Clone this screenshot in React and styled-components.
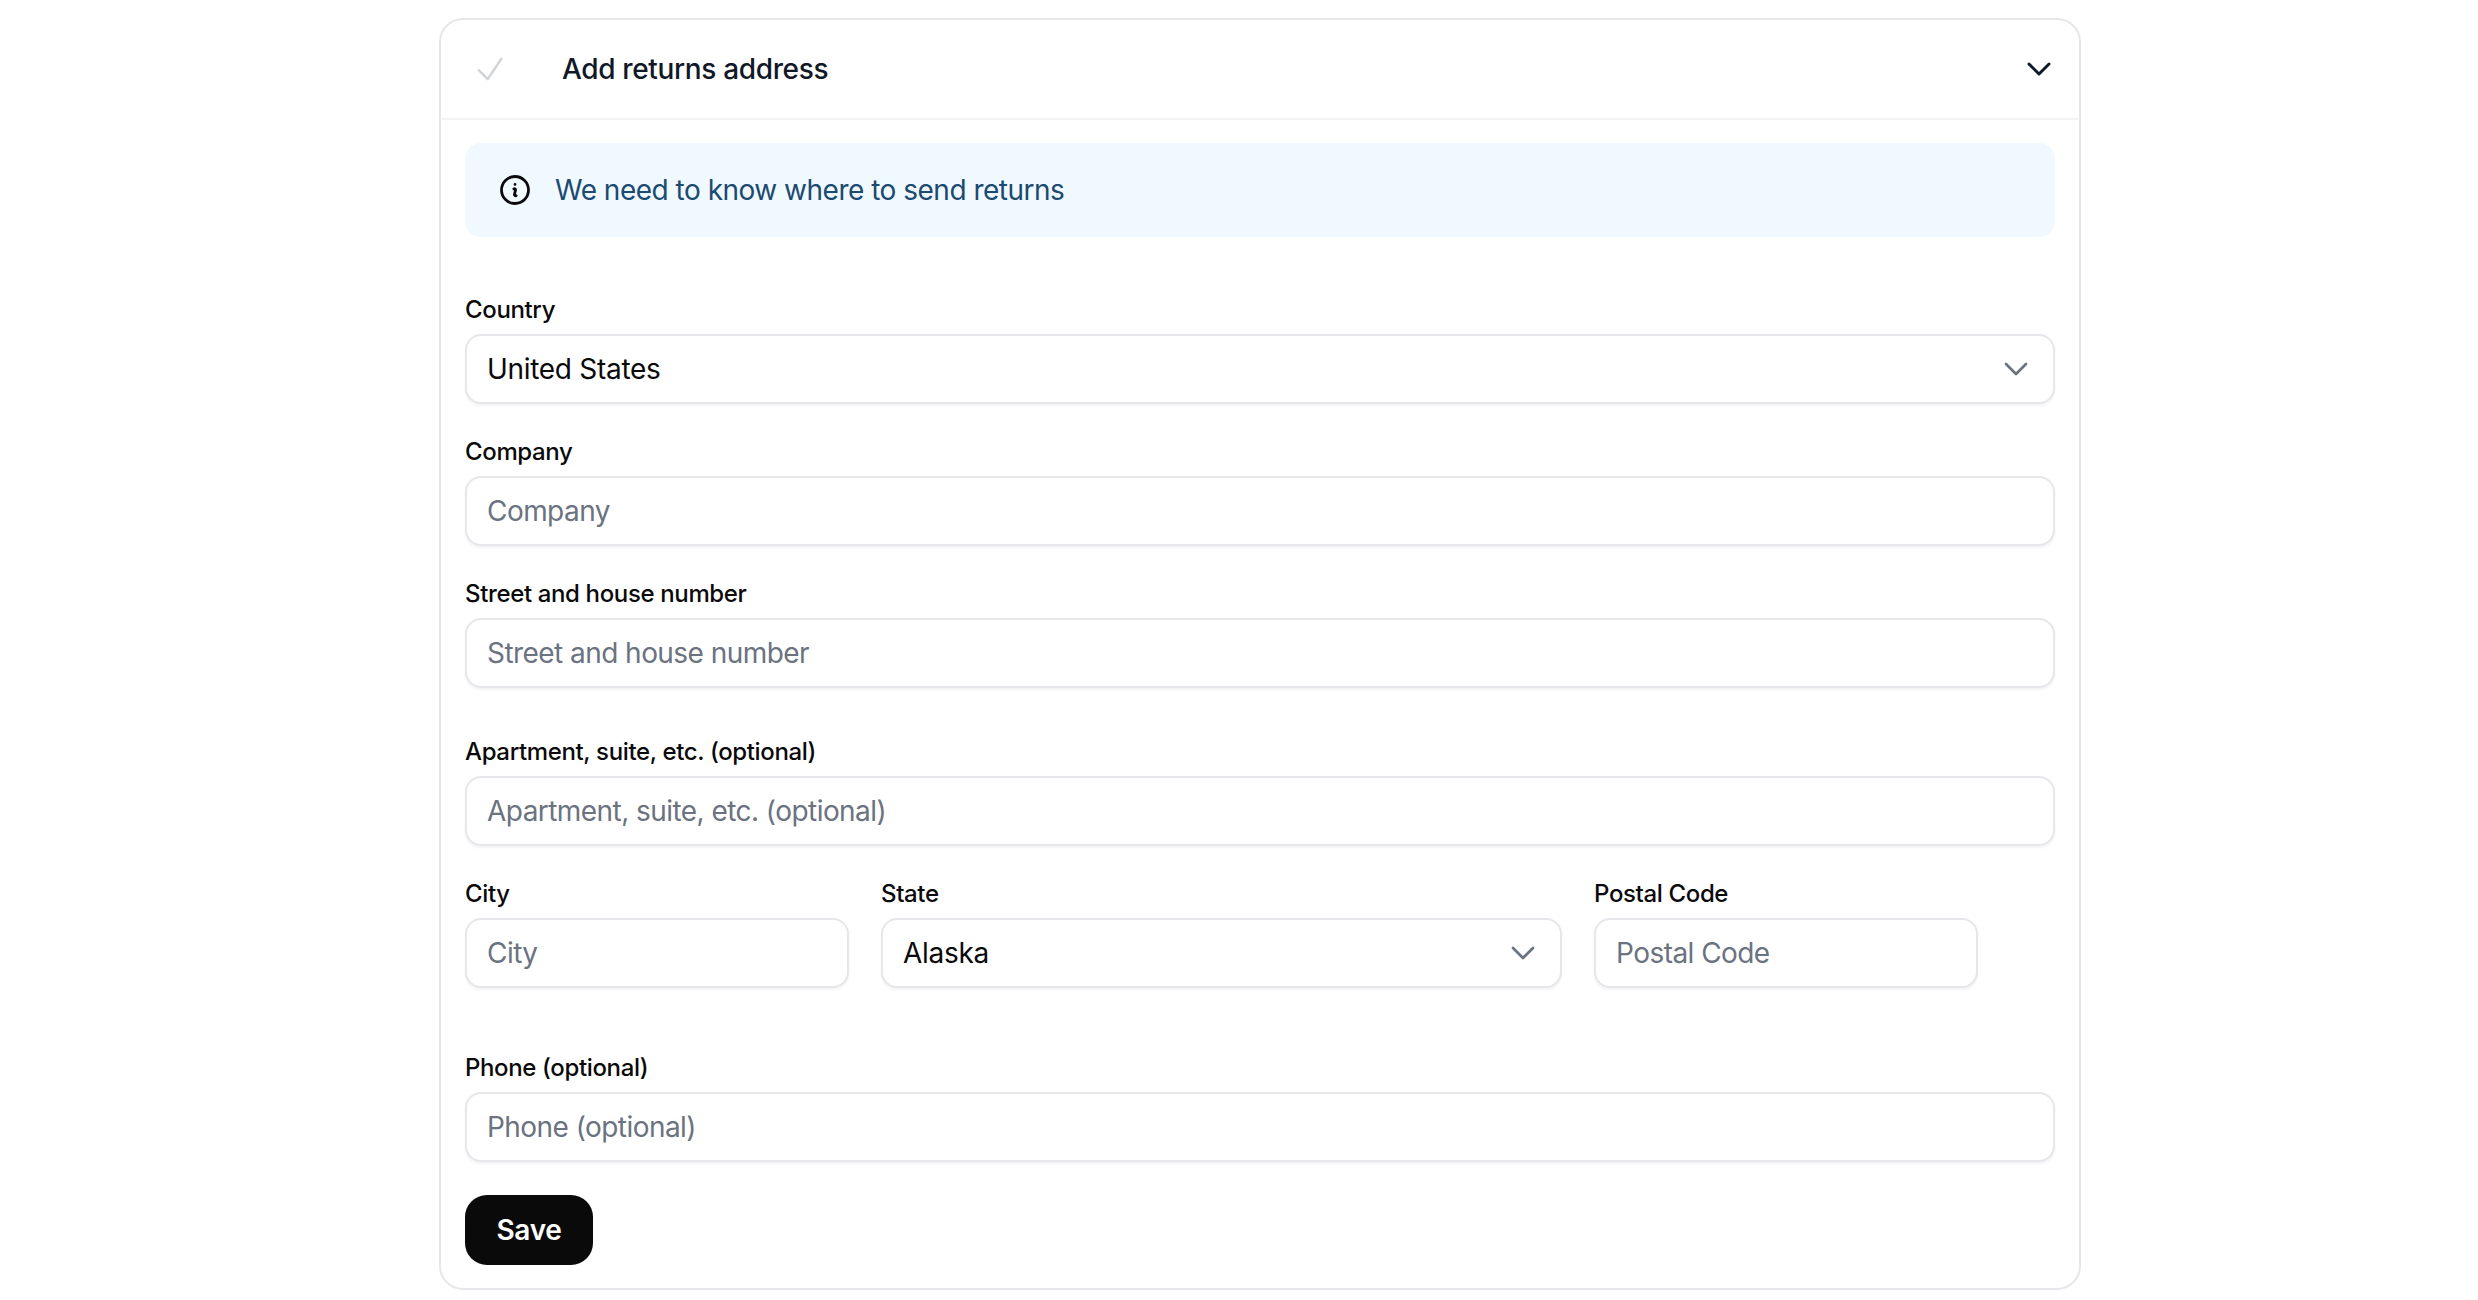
import React from "react";
import styled, { createGlobalStyle } from "styled-components";

const Global = createGlobalStyle`
  * { box-sizing: border-box; }
  html, body { margin: 0; padding: 0; background: #fff; }
  body { font-family: Inter, "Noto Sans", "Liberation Sans", sans-serif; color: #0a0a0b; -webkit-font-smoothing: antialiased; }
`;

const Page = styled.main`
  width: 2478px;
  height: 1300px;
  padding: 18px 0 0 439px;
  overflow: hidden;
`;

const Card = styled.section`
  width: 1642px;
  height: 1272px;
  border: 2px solid #e5e7eb;
  border-radius: 24px;
  background: #fff;
`;

const Header = styled.header`
  height: 100px;
  display: flex;
  align-items: center;
  padding: 0 24px 0 31px;
  border-bottom: 2px solid #f3f4f6;
`;

const Title = styled.h2`
  margin: 0 0 0 54px;
  flex: 1;
  font-size: 28px;
  font-weight: 500;
  line-height: 36px;
  color: #111827;
  letter-spacing: -0.35px;
`;

const Icon = styled.svg`
  display: block;
  flex: none;
  fill: none;
  stroke: ${(p) => p.$color};
  stroke-width: ${(p) => p.$weight};
  stroke-linecap: round;
  stroke-linejoin: round;
`;

const Body = styled.div`
  padding: 23px 24px 0;
`;

const Notice = styled.div`
  height: 94px;
  display: flex;
  align-items: center;
  gap: 22px;
  padding: 0 0 0 32px;
  border-radius: 16px;
  background: #f0f9ff;
  color: #1c4a70;
  font-size: 28px;
  letter-spacing: -0.5px;
`;

const Form = styled.form`
  display: flex;
  flex-direction: column;
  margin-top: 56px;
`;

const Field = styled.div`
  display: flex;
  flex-direction: column;
  margin-bottom: ${(p) => p.$after || "0"};
`;

const Label = styled.label`
  font-size: 24px;
  font-weight: 500;
  line-height: 34px;
  margin-bottom: 7px;
  color: #0a0a0b;
  letter-spacing: -0.36px;
`;

const Input = styled.input`
  width: 100%;
  height: 70px;
  padding: 0 20px;
  border: 2px solid #e5e7eb;
  border-radius: 16px;
  background: #fff;
  box-shadow: 0 2px 3px rgba(0, 0, 0, 0.05);
  font: inherit;
  font-size: 28px;
  letter-spacing: -0.55px;
  color: #0a0a0b;
  outline: none;
  &::placeholder { color: #6b7280; opacity: 1; }
`;

const Select = styled.div`
  height: 70px;
  display: flex;
  align-items: center;
  justify-content: space-between;
  padding: 0 21px 0 20px;
  border: 2px solid #e5e7eb;
  border-radius: 16px;
  background: #fff;
  box-shadow: 0 2px 3px rgba(0, 0, 0, 0.05);
  font-size: 28px;
  letter-spacing: -0.3px;
  color: #0a0a0b;
`;

const Row = styled.div`
  display: grid;
  grid-template-columns: 384px 681px 384px;
  column-gap: 32px;
  margin-bottom: ${(p) => p.$after || "0"};
`;

const Save = styled.button`
  align-self: flex-start;
  height: 70px;
  width: 128px;
  border: 0;
  border-radius: 22px;
  background: #0a0a0b;
  color: #fff;
  font: inherit;
  font-size: 28px;
  font-weight: 600;
  letter-spacing: -0.3px;
`;

const Chevron = ({ color, size = 32, weight = 2 }) => (
  <Icon viewBox="0 0 24 24" width={size} height={size} $color={color} $weight={weight}>
    <path d="m19.5 8.25-7.5 7.5-7.5-7.5" />
  </Icon>
);

const TextField = ({ label, after }) => (
  <Field $after={after}>
    <Label>{label}</Label>
    <Input placeholder={label} />
  </Field>
);

const SelectField = ({ label, value, after }) => (
  <Field $after={after}>
    <Label>{label}</Label>
    <Select>
      {value}
      <Chevron color="#6b7280" />
    </Select>
  </Field>
);

export default function App() {
  return (
    <Page>
      <Global />
      <Card>
        <Header>
          <Icon viewBox="0 0 24 24" width={36} height={36} $color="#d1d5db" $weight={1.75}>
            <path d="m4.5 12.75 6 6 9-13.5" />
          </Icon>
          <Title>Add returns address</Title>
          <Chevron color="#111827" weight={2.25} />
        </Header>
        <Body>
          <Notice>
            <Icon viewBox="0 0 24 24" width={36} height={36} $color="#0a0a0b" $weight={1.85}>
              <path d="m11.25 11.25.041-.02a.75.75 0 0 1 1.063.852l-.708 2.836a.75.75 0 0 0 1.063.853l.041-.021M21 12a9 9 0 1 1-18 0 9 9 0 0 1 18 0Zm-9-3.75h.008v.008H12V8.25Z" />
            </Icon>
            We need to know where to send returns
          </Notice>
          <Form>
            <SelectField label="Country" value="United States" after="31px" />
            <TextField label="Company" after="31px" />
            <TextField label="Street and house number" after="47px" />
            <TextField label="Apartment, suite, etc. (optional)" after="31px" />
            <Row $after="63px">
              <TextField label="City" />
              <SelectField label="State" value="Alaska" />
              <TextField label="Postal Code" />
            </Row>
            <TextField label="Phone (optional)" after="33px" />
            <Save type="button">Save</Save>
          </Form>
        </Body>
      </Card>
    </Page>
  );
}
